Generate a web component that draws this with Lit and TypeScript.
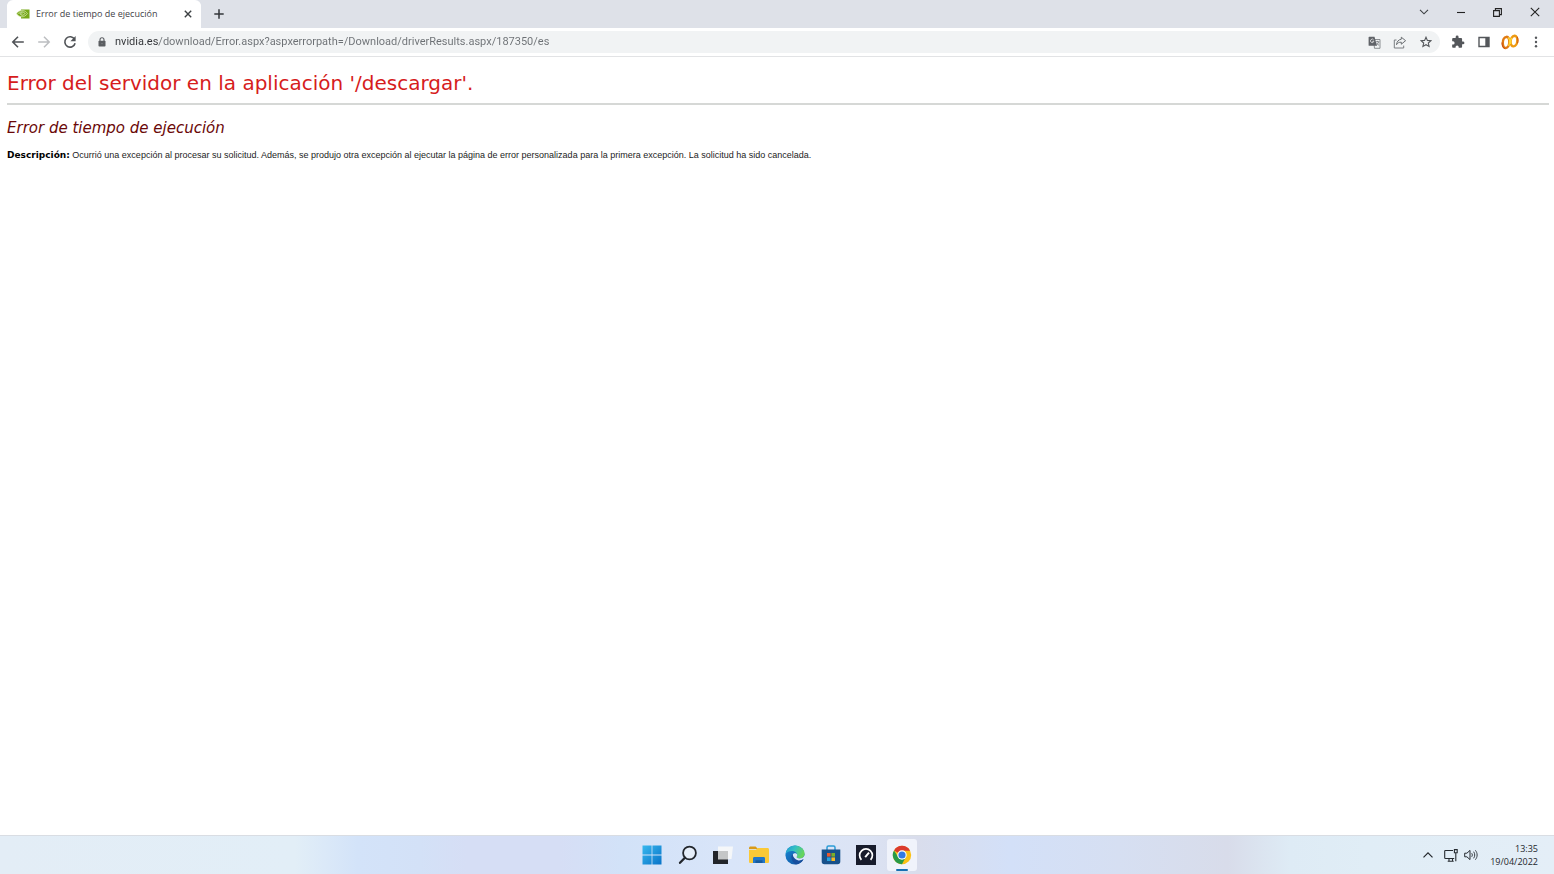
import { LitElement, html, css, svg } from "lit";
import { customElement } from "lit/decorators.js";

const icons = {
  nvidia: svg`<svg viewBox="0 0 14 12" width="14" height="12"><path d="M5 1.500h8.500v9H5z" fill="#76a818"/><path d="M.6 5.800C2 3.600 4 2.500 6.200 2.500c2.400 0 4 1.200 5.200 3-1.400 2-3.200 3.300-5.400 3.300C3.800 8.800 1.800 7.800.6 5.800z" fill="#76a818" stroke="#dcebb8" stroke-width=".7"/><path d="M2.600 5.800c1-1.400 2.200-1.900 3.600-1.900 1.300 0 2.200.7 2.900 1.600-.8 1.100-1.700 1.700-2.900 1.700-.9 0-1.600-.5-2-1.300.6-.8 1.300-1.100 2.300-.8" fill="none" stroke="#e6f2cb" stroke-width=".8"/></svg>`,
  close: svg`<svg viewBox="0 0 8 8" width="8" height="8"><path d="M.8.8l6.400 6.400M7.200.8L.8 7.200" stroke="#3c4043" stroke-width="1.400"/></svg>`,
  plus: svg`<svg viewBox="0 0 10 10" width="10" height="10"><path d="M5 .3v9.400M.3 5h9.400" stroke="#33363a" stroke-width="1.500"/></svg>`,
  chevronDown: svg`<svg viewBox="0 0 10 6" width="10" height="6"><path d="M1 .8l4 4 4-4" fill="none" stroke="#3c4043" stroke-width="1.100"/></svg>`,
  minimize: svg`<svg viewBox="0 0 8 8" width="8" height="8"><path d="M0 4.500h8" stroke="#222" stroke-width="1.100"/></svg>`,
  restore: svg`<svg viewBox="0 0 9 9" width="9" height="9"><path d="M.6 2.600h5.800v5.800H.6zM2.400 2.400V.6h6v6h-1.800" fill="none" stroke="#222" stroke-width="1.100"/></svg>`,
  closeWindow: svg`<svg viewBox="0 0 10 10" width="10" height="10"><path d="M.8.8l8.400 8.400M9.200.8L.8 9.200" stroke="#222" stroke-width="1.100"/></svg>`,
  back: svg`<svg viewBox="0 0 14 14" width="14" height="14"><path d="M12.800 7H2.200M7 1.700L1.800 7 7 12.300" fill="none" stroke="#505357" stroke-width="1.600"/></svg>`,
  forward: svg`<svg viewBox="0 0 14 14" width="14" height="14"><path d="M1.200 7h10.600M7 1.700L12.200 7 7 12.300" fill="none" stroke="#bcbec1" stroke-width="1.500"/></svg>`,
  reload: svg`<svg viewBox="0 0 14 14" width="14" height="14"><path d="M11.600 4.400A5.200 5.200 0 1 0 12.100 8.200" fill="none" stroke="#505357" stroke-width="1.600"/><path d="M12.600 1v5.200H7.400z" fill="#505357"/></svg>`,
  lock: svg`<svg viewBox="0 0 8 10" width="8" height="10"><path d="M2 4V2.700a2 2 0 0 1 4 0V4" fill="none" stroke="#5a5d61" stroke-width="1.100"/><rect x=".5" y="3.700" width="7" height="5.800" rx=".8" fill="#5a5d61"/><circle cx="4" cy="6.600" r=".7" fill="#85888b"/></svg>`,
  translate: svg`<svg viewBox="0 0 13 13" width="13" height="13"><path d="M5.500 3.500H12v8.800H6.500z" fill="#f1f3f4" stroke="#74777b" stroke-width=".8"/><path d="M1.200.7h5.300L9 9.800H1.200a.6.600 0 0 1-.6-.6V1.300a.6.600 0 0 1 .6-.6z" fill="#606368"/><path d="M5.700 4.100A1.700 1.700 0 1 0 5.800 5.400H4.300" fill="none" stroke="#eee" stroke-width=".8"/><path d="M7.900 5.700h3.400M9.500 4.900v.8M10.700 5.900c-.4 1.400-1.200 2.500-2.300 3.200M8.800 7.300c.5.900 1.200 1.500 2.300 2" fill="none" stroke="#686b70" stroke-width=".7"/></svg>`,
  share: svg`<svg viewBox="0 0 14 13" width="14" height="13"><path d="M3.500 4H1.300v8h9.400V9.600" fill="none" stroke="#7a7d81" stroke-width="1"/><path d="M8.300 1.200l4.300 3.500-4.300 3.500V6.200c-2.200-.1-3.700.6-4.800 2.500.3-3 1.900-5.100 4.800-5.500z" fill="none" stroke="#6b6e72" stroke-width="1" stroke-linejoin="round"/></svg>`,
  star: svg`<svg viewBox="0 0 12 12" width="12" height="12"><path d="M6 1.200l1.400 3.200 3.500.3-2.600 2.300.8 3.500L6 8.700l-3.100 1.800.8-3.500L1.100 4.700l3.500-.3z" fill="none" stroke="#54575b" stroke-width="1.100"/></svg>`,
  puzzle: svg`<svg viewBox="0 0 24 24" width="14" height="14"><path fill="#54575b" d="M20.500 11H19V7c0-1.100-.9-2-2-2h-4V3.500a2.500 2.500 0 0 0-5 0V5H4c-1.100 0-2 .9-2 2v3.800h1.500a2.700 2.700 0 0 1 0 5.400H2V20c0 1.100.9 2 2 2h3.800v-1.500a2.700 2.700 0 0 1 5.400 0V22H17c1.100 0 2-.9 2-2v-4h1.500a2.500 2.500 0 0 0 0-5z"/></svg>`,
  panel: svg`<svg viewBox="0 0 12 12" width="12" height="12"><path d="M1 1.500h10v9H1z" fill="none" stroke="#54575b" stroke-width="1.400"/><path d="M7.300 1.500H11v9H7.300z" fill="#54575b"/></svg>`,
  profile: svg`<svg viewBox="0 0 18 16" width="18" height="16"><g fill="none" stroke-width="2.400"><path d="M5.600 2.800C3.200 3.300 1.700 6 1.800 9.200c.1 3 1.200 5 2.800 4.800 2-.2 3.500-2.600 3.700-5.800.2-3-.9-5.400-2.700-5.400z" stroke="#e07a12"/><path d="M13.600 1.700c-2.300.4-4 3-4 6 0 3 1.300 4.900 3 4.700 2.100-.3 3.600-3 3.700-5.900.1-2.900-1-4.900-2.700-4.800z" stroke="#ee9a12"/></g><path d="M7 3.500c2 1.500 2 5 .7 8.500M10.700 4c-1.200 1.500-1.500 3.500-1 6" fill="none" stroke="#ffd52e" stroke-width="1.500"/><path d="M1 8.500c0 3.400 1.300 5.800 3 6M16 2.800c1.200 1.800 1.300 4.300.5 6.500" fill="none" stroke="#c94d15" stroke-width="1"/></svg>`,
  dots: svg`<svg viewBox="0 0 4 12" width="4" height="12"><g fill="#54575b"><circle cx="2" cy="1.700" r="1.200"/><circle cx="2" cy="6" r="1.200"/><circle cx="2" cy="10.300" r="1.200"/></g></svg>`,
  start: svg`<svg viewBox="0 0 20 20" width="20" height="20"><defs><linearGradient id="w" x1="0" y1="0" x2="1" y2="1"><stop offset="0" stop-color="#38b8ee"/><stop offset="1" stop-color="#0873c8"/></linearGradient></defs><path d="M.5.500h9.100v9.100H.5zM10.400.5h9.100v9.100h-9.100zM.5 10.400h9.100v9.100H.5zM10.400 10.400h9.100v9.100h-9.100z" fill="url(#w)"/></svg>`,
  search: svg`<svg viewBox="0 0 20 20" width="20" height="20"><circle cx="11.500" cy="8" r="6.400" fill="#e6eef9" stroke="#22262c" stroke-width="1.800"/><path d="M6.900 12.700L2 17.800" stroke="#22262c" stroke-width="2.300" stroke-linecap="round"/></svg>`,
  tasks: svg`<svg viewBox="0 0 20 20" width="20" height="20"><path d="M5 1.500h15L18.500 14H5z" fill="#f5f7f9"/><path d="M0 6h15v13H0z" fill="#22252a"/><path d="M5 6h10v8.500H5z" fill="#c4c6c7"/></svg>`,
  folder: svg`<svg viewBox="0 0 20 20" width="20" height="20"><path d="M0 3.200C0 2 .6 1.500 1.600 1.500h5L9 4H0z" fill="#d99a17"/><path d="M0 4.800h6.800L9 3h9.500c.9 0 1.500.5 1.500 1.500v12c0 1-.5 1.500-1.500 1.500h-17C.5 18 0 17.500 0 16.500z" fill="#fbc936"/><path d="M4 18v-4.500c0-1 .5-1.500 1.500-1.500h9c1 0 1.500.5 1.500 1.500V18z" fill="#2377c8"/><path d="M6.500 15.300h7V18h-7z" fill="#175b9d"/></svg>`,
  edge: svg`<svg viewBox="0 0 20 20" width="20" height="20"><defs><linearGradient id="ea" x1="0" y1="0" x2="1" y2=".4"><stop offset="0" stop-color="#1e94d4"/><stop offset=".5" stop-color="#34c0c4"/><stop offset="1" stop-color="#66d55b"/></linearGradient><linearGradient id="eb" x1="0" y1="0" x2="1" y2="1"><stop offset="0" stop-color="#1689d8"/><stop offset="1" stop-color="#134c97"/></linearGradient></defs><circle cx="10" cy="10" r="9.600" fill="url(#eb)"/><path d="M.5 9C1.200 3.800 5.200.4 10.200.4c5.400 0 9.400 4 9.400 8.100 0 3-2.200 5-5 5-1.900 0-3-.8-3-1.400 0-.4.700-.8.700-2.100C12.300 7.700 9.600 6 6.800 6 4.200 6 1.800 7 .5 9z" fill="url(#ea)"/><path d="M7.800 9.500c-1 3.800 2.700 7.400 7 6.200 1.200-.3 2.300-.9 3.200-1.500l2 .3V10c-1.300 2.500-3.200 3.500-5.400 3.500-1.900 0-3-.8-3-1.400 0-.4.700-.8.700-2.100 0-2.200-3.700-2.500-4.500-.5z" fill="#dce8f7"/><path d="M7.500 9c-2.500 2.800-.3 8.300 3.400 10.500 2.900-.1 5.700-1.900 7.300-4.700-5 2.400-9.800-.8-10.700-5.800z" fill="#174f9e"/></svg>`,
  store: svg`<svg viewBox="0 0 20 20" width="20" height="20"><path d="M6 5V2.500C6 1.500 6.500 1 7.500 1h5c1 0 1.500.5 1.500 1.500V5" fill="none" stroke="#2b9cd6" stroke-width="1.500"/><path d="M.7 4.500h18.600v12c0 1.800-.9 2.700-2.700 2.700H3.400c-1.800 0-2.700-.9-2.700-2.700z" fill="#17508a"/><path d="M6 8h3.600v3.600H6z" fill="#e9582c"/><path d="M10.400 8H14v3.600h-3.600z" fill="#7aaf28"/><path d="M6 12.400h3.600V16H6z" fill="#25a2df"/><path d="M10.400 12.400H14V16h-3.600z" fill="#f7b923"/></svg>`,
  gauge: svg`<svg viewBox="0 0 20 20" width="20" height="20"><path d="M0 0h20v20H0z" fill="#171b2b"/><path d="M5.400 14.800a6.400 6.400 0 1 1 9.200 0" fill="none" stroke="#fff" stroke-width="1.700"/><path d="M9.200 12.200L13 7.600" stroke="#fff" stroke-width="1.900"/></svg>`,
  chrome: svg`<svg viewBox="0 0 20 20" width="20" height="20"><circle cx="10" cy="10" r="9.200" fill="#fbc116"/><path d="M10 10L2.030 5.400A9.200 9.200 0 0 1 17.970 5.400L18 5.800H10z" fill="#db3a2d"/><path d="M2.030 5.400A9.200 9.200 0 0 0 10 19.200l3.800-7.200L10 10 6 11.800z" fill="#299a48"/><circle cx="10" cy="10" r="4.700" fill="#fff"/><circle cx="10" cy="10" r="3.600" fill="#3179e4"/></svg>`,
  chevronUp: svg`<svg viewBox="0 0 10 6" width="10" height="6"><path d="M.5 5.400L5 .9l4.500 4.500" fill="none" stroke="#22262b" stroke-width="1.200"/></svg>`,
  network: svg`<svg viewBox="0 0 14 13" width="14" height="13"><path d="M9 1.500H1.500C1 1.500.7 1.800.7 2.300v6.400c0 .5.300.8.800.8h8.700M3.700 12.300h6M5 9.500v2.800M8.500 9.500v2.800" fill="none" stroke="#262b31" stroke-width="1.100"/><path d="M10.400.6h2.800v3.200h-2.800zM11.800 3.800v8.500" fill="none" stroke="#262b31" stroke-width="1.100"/></svg>`,
  sound: svg`<svg viewBox="0 0 14 12" width="14" height="12"><path d="M.7 4.200h2.200L6 1.400v9.200L2.900 7.800H.7z" fill="none" stroke="#262b31" stroke-width="1" stroke-linejoin="round"/><path d="M7.700 4.200c.8 1 .8 2.600 0 3.600M9.600 2.700c1.500 1.900 1.500 4.700 0 6.600M11.400 1.300c2.300 2.800 2.300 6.600 0 9.400" fill="none" stroke="#3a4047" stroke-width="1"/></svg>`,
};

const button = (label: string, icon: unknown, cls = "") =>
  html`<button class="btn ${cls}" type="button" aria-label=${label}>${icon}</button>`;

@customElement("browser-chrome")
class BrowserChrome extends LitElement {
  static styles = css`
    :host { display: block; font-family: "Open Sans", "Noto Sans", sans-serif; }
    .btn { border: 0; padding: 0; background: none; display: flex; align-items: center; justify-content: center; height: 26px; width: 26px; flex: none; }
    .strip { display: flex; height: 28px; background: #dee1e8; padding: 0 1px 0 7px; }
    .tab { display: flex; align-items: center; width: 194px; height: 27px; box-sizing: border-box; background: #fff; border-radius: 6px 6px 0 0; padding-left: 9px; box-shadow: 0 1px #fff; }
    .title { flex: 1; margin-left: 6px; font-size: 9px; line-height: 16px; color: #3f4247; white-space: nowrap; }
    .new { width: 36px; height: 28px; }
    .windows { display: flex; margin-left: auto; }
    .window { width: 37px; height: 24px; }
    .bar { display: flex; align-items: center; height: 28px; padding: 0 5px; background: #fff; border-bottom: 1px solid #e2e3e5; }
    .omnibox { flex: 1; display: flex; align-items: center; height: 22px; border-radius: 11px; background: #f1f3f4; margin: 0 5px; padding: 0 1px 0 10px; }
    .lock { display: flex; }
    .url {
      flex: 1; min-width: 0; border: 0; outline: 0; padding: 0; margin-left: 9px; height: 20px;
      font: 11px/20px Roboto, "Open Sans", sans-serif;
      background: linear-gradient(90deg, #303236 44px, #6c7074 44px); -webkit-background-clip: text; background-clip: text; color: transparent;
    }
  `;
  render() {
    return html`
      <div class="strip">
        <div class="tab">${icons.nvidia}<span class="title">Error de tiempo de ejecución</span>${button("Cerrar pestaña", icons.close)}</div>
        ${button("Nueva pestaña", icons.plus, "new")}
        <div class="windows">
          ${button("Buscar pestañas", icons.chevronDown, "window")}
          ${button("Minimizar", icons.minimize, "window")}
          ${button("Restaurar", icons.restore, "window")}
          ${button("Cerrar", icons.closeWindow, "window")}
        </div>
      </div>
      <div class="bar">
        ${button("Atrás", icons.back)}${button("Adelante", icons.forward)}${button("Recargar", icons.reload)}
        <div class="omnibox">
          <span class="lock">${icons.lock}</span>
          <input class="url" type="text" aria-label="Dirección" value="nvidia.es/download/Error.aspx?aspxerrorpath=/Download/driverResults.aspx/187350/es" />
          ${button("Traducir", icons.translate)}${button("Compartir", icons.share)}${button("Marcador", icons.star)}
        </div>
        ${button("Extensiones", icons.puzzle)}${button("Panel lateral", icons.panel)}${button("Perfil", icons.profile)}${button("Menú", icons.dots)}
      </div>
    `;
  }
}

@customElement("error-page")
class ErrorPage extends LitElement {
  static styles = css`
    :host { display: block; padding: 12px 5px 0 7px; background: #fff; }
    .title { margin: 0; font: 20px/28px "DejaVu Sans", sans-serif; color: #d61c1c; }
    .rule { margin: 6px 0 0; border: 0; height: 2px; background: #d6d8d6; }
    .subtitle { margin: 12px 0 0; font: italic 15px/22px "DejaVu Sans", sans-serif; color: #6a0808; }
    .text { margin: 10px 0 0; font: 9px/12px "Liberation Sans", Arial, sans-serif; color: #1c1c1c; }
    .label { font: bold 9px/12px "DejaVu Sans", sans-serif; color: #000; }
  `;
  render() {
    return html`
      <h1 class="title">Error del servidor en la aplicación '/descargar'.</h1>
      <hr class="rule" />
      <h2 class="subtitle">Error de tiempo de ejecución</h2>
      <p class="text"><b class="label">Descripción:</b> Ocurrió una excepción al procesar su solicitud. Además, se produjo otra excepción al ejecutar la página de error personalizada para la primera excepción. La solicitud ha sido cancelada.</p>
    `;
  }
}

@customElement("task-bar")
class TaskBar extends LitElement {
  static styles = css`
    :host {
      display: grid; grid-template-columns: 1fr 280px 1fr; align-items: center; height: 38px; border-top: 1px solid #d9dde3;
      font-family: "Open Sans", "Noto Sans", sans-serif;
      background: linear-gradient(90deg, #e3edf6 0, #e2eef7 19%, #d3e3f9 23%, #d3e1f7 27%, #d6def5 30%, #d6def5 36%, #d2e2f8 40%, #d9e5f9 47%, #dce4f5 55%, #d9ddec 59%, #d3e0f8 65%, #d6dff2 72%, #d8dcea 79%, #deebf5 83%, #e0edf6 88%, #e4eef7 100%);
    }
    .btn { border: 0; padding: 0; background: none; display: flex; align-items: center; justify-content: center; height: 32px; width: 30px; border-radius: 3px; }
    .apps { display: flex; justify-content: space-between; grid-column: 2; }
    .active { position: relative; background: #f0f3fb; }
    .active::after { content: ""; position: absolute; bottom: 0; left: 9px; width: 12px; height: 2px; border-radius: 1px; background: #1670b2; }
    .tray { display: flex; align-items: center; justify-content: flex-end; padding-right: 16px; }
    .small { width: 20px; }
    .first { margin-right: 3px; }
    .clock { margin-left: 9px; text-align: right; font-size: 9px; line-height: 13px; color: #23272c; }
  `;
  render() {
    return html`
      <nav class="apps" aria-label="Aplicaciones">
        ${button("Inicio", icons.start)}${button("Buscar", icons.search)}${button("Vista de tareas", icons.tasks)}${button("Explorador", icons.folder)}
        ${button("Edge", icons.edge)}${button("Store", icons.store)}${button("Medidor", icons.gauge)}${button("Chrome", icons.chrome, "active")}
      </nav>
      <div class="tray">
        ${button("Iconos ocultos", icons.chevronUp, "small first")}${button("Red", icons.network, "small")}${button("Volumen", icons.sound, "small")}
        <time class="clock" datetime="2022-04-19T13:35">13:35<br />19/04/2022</time>
      </div>
    `;
  }
}

@customElement("app-root")
class AppRoot extends LitElement {
  static styles = css`
    :host { display: flex; flex-direction: column; min-height: 100vh; background: #fff; }
    .page { flex: 1; }
  `;
  render() {
    return html`<browser-chrome></browser-chrome><error-page class="page"></error-page><task-bar></task-bar>`;
  }
}
